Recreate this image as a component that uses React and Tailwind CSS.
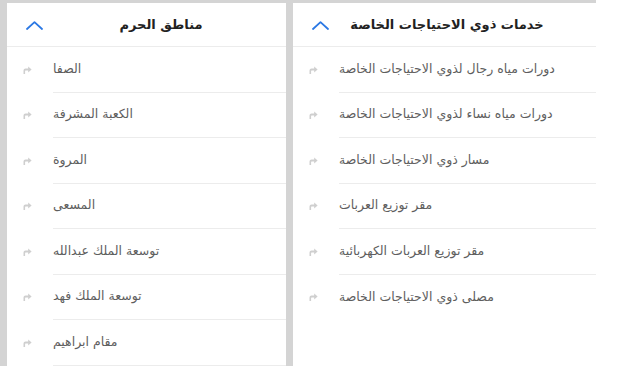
import React from "react";

const haramAreas = [
  "الصفا",
  "الكعبة المشرفة",
  "المروة",
  "المسعى",
  "توسعة الملك عبدالله",
  "توسعة الملك فهد",
  "مقام ابراهيم",
];

const specialNeeds = [
  "دورات مياه رجال لذوي الاحتياجات الخاصة",
  "دورات مياه نساء لذوي الاحتياجات الخاصة",
  "مسار ذوي الاحتياجات الخاصة",
  "مقر توزيع العربات",
  "مقر توزيع العربات الكهربائية",
  "مصلى ذوي الاحتياجات الخاصة",
];

const ChevronUp = () => (
  <svg width="17" height="9" viewBox="0 0 17 9" fill="none">
    <path d="M1 8 L8.5 1.2 L16 8" stroke="#2b78e4" strokeWidth="1.8" strokeLinecap="round" strokeLinejoin="round" />
  </svg>
);

// small forward arrow shown before every item
const ForwardIcon = () => (
  <svg width="9" height="8" viewBox="0 0 9 8">
    <path d="M0.5 8 V4.6 Q0.5 2.6 2.5 2.6 H5.2 V0.6 L8.6 3.5 L5.2 6.4 V4.4 H2.6 Q2.1 4.4 2.1 5 V8 Z" fill="#cfcfcf" />
  </svg>
);

const Panel = ({ title, items, width, lastBorder }) => (
  <div className={`${width} bg-white flex flex-col`}>
    <div className="h-[44px] flex items-center border-b border-[#ececec] shrink-0">
      <div className="w-[40px] flex justify-end pr-[4px] pt-[1px]">
        <ChevronUp />
      </div>
      <div className="w-[228px] text-center text-[13px] font-bold text-[#222]" dir="rtl">
        {title}
      </div>
    </div>
    {items.map((item, i) => (
      <div key={item} className="h-[45.5px] flex items-center shrink-0">
        <div className="w-[46px] pl-[16px] flex items-center">
          <ForwardIcon />
        </div>
        <div
          className={`flex-1 h-full flex items-center text-[12.5px] text-[#5e5e5e] ${
            i < items.length - 1 || lastBorder ? "border-b border-[#ececec]" : ""
          }`}
        >
          <span dir="rtl">{item}</span>
        </div>
      </div>
    ))}
  </div>
);

export default function App() {
  return (
    <div
      className="w-[620px] h-[366px] overflow-hidden bg-white"
      style={{ fontFamily: '"DejaVu Sans", "Noto Sans", sans-serif' }}
    >
      <div className="w-[596px] h-full bg-[#d4d4d4] pt-[3px] pl-[7px] flex gap-[7px]">
        <Panel title="مناطق الحرم" items={haramAreas} width="w-[279px]" lastBorder />
        <Panel title="خدمات ذوي الاحتياجات الخاصة" items={specialNeeds} width="w-[303px]" />
      </div>
    </div>
  );
}
